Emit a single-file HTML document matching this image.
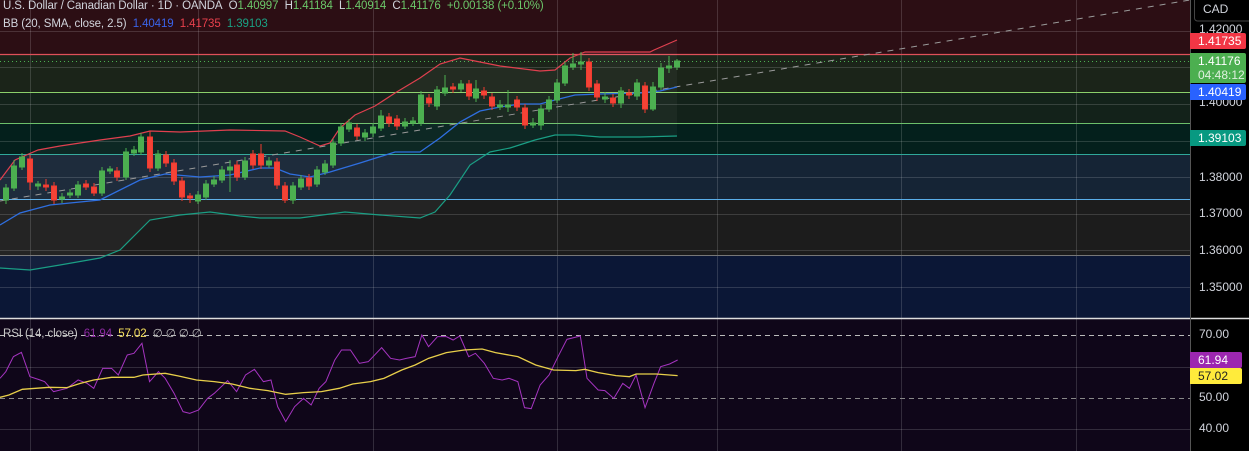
<!DOCTYPE html>
<html><head><meta charset="utf-8"><style>
html,body{margin:0;padding:0;background:#000;}
body{width:1249px;height:451px;overflow:hidden;position:relative;font-family:"Liberation Sans",sans-serif;}
.t{position:absolute;font-size:11.5px;white-space:nowrap;color:#d1d4dc;letter-spacing:-0.1px;}
.ax{position:absolute;left:1199px;font-size:12px;color:#d1d4dc;}
.tag{position:absolute;left:1190px;width:56px;font-size:12px;color:#fff;padding-left:8px;box-sizing:border-box;border-radius:0 2px 2px 0;}
</style></head><body>
<svg width="1249" height="451" style="position:absolute;left:0;top:0">
<rect x="0" y="0" width="1190" height="54" fill="#2c0e14"/>
<rect x="0" y="54" width="1190" height="38" fill="#1b2419"/>
<rect x="0" y="92" width="1190" height="31" fill="#13221a"/>
<rect x="0" y="123" width="1190" height="31" fill="#04201c"/>
<rect x="0" y="154" width="1190" height="46" fill="#152435"/>
<rect x="0" y="200" width="1190" height="55" fill="#1c1c1c"/>
<rect x="0" y="255" width="1190" height="63" fill="#0b1736"/>
<rect x="0" y="319" width="1190" height="132" fill="#0f0619"/>
<g stroke="#ffffff" stroke-opacity="0.15" stroke-width="1">
<line x1="30.5" y1="0" x2="30.5" y2="451"/><line x1="198.5" y1="0" x2="198.5" y2="451"/><line x1="373.5" y1="0" x2="373.5" y2="451"/><line x1="557.5" y1="0" x2="557.5" y2="451"/><line x1="717.5" y1="0" x2="717.5" y2="451"/><line x1="901.5" y1="0" x2="901.5" y2="451"/><line x1="1076.5" y1="0" x2="1076.5" y2="451"/>
<line x1="0" y1="31.5" x2="1190" y2="31.5"/><line x1="0" y1="67.5" x2="1190" y2="67.5"/><line x1="0" y1="104.5" x2="1190" y2="104.5"/><line x1="0" y1="141.5" x2="1190" y2="141.5"/><line x1="0" y1="177.5" x2="1190" y2="177.5"/><line x1="0" y1="214.5" x2="1190" y2="214.5"/><line x1="0" y1="250.5" x2="1190" y2="250.5"/><line x1="0" y1="287.5" x2="1190" y2="287.5"/>
<line x1="0" y1="367.5" x2="1190" y2="367.5"/><line x1="0" y1="429.5" x2="1190" y2="429.5"/>
</g>
<line x1="0" y1="54.5" x2="1190" y2="54.5" stroke="#e0505a" stroke-width="1.2"/>
<line x1="0" y1="61.5" x2="1190" y2="61.5" stroke="#4caf50" stroke-dasharray="1,3"/>
<line x1="0" y1="92.5" x2="1190" y2="92.5" stroke="#8bd06a" stroke-width="1"/>
<line x1="0" y1="123.5" x2="1190" y2="123.5" stroke="#6cc06a" stroke-width="1"/>
<line x1="0" y1="154.5" x2="1190" y2="154.5" stroke="#2fa89a" stroke-width="1"/>
<line x1="0" y1="199.5" x2="1190" y2="199.5" stroke="#5aaee8" stroke-width="1"/>
<line x1="0" y1="255.5" x2="1190" y2="255.5" stroke="#777" stroke-width="1"/>
<line x1="0" y1="318.5" x2="1249" y2="318.5" stroke="#ddd" stroke-width="1.5"/>
<polygon fill="#ffffff" fill-opacity="0.04" points="0,180 15,160 38,150 60,146 100,140 130,136 150,131 180,132 230,130 285,131 300,137 320,146 330,143 340,128 355,115 375,106 395,93 420,78 440,64 460,58 480,62 500,66 540,71 555,70 570,58 585,52 600,52 650,52 677,40 677,136 640,137 600,137 575,135 555,135 535,140 510,148 490,152 470,165 450,195 435,212 420,218 380,215 345,212 300,218 260,218 240,216 210,212 180,215 150,220 138,232 120,250 100,258 60,265 30,270 0,268"/>
<line x1="0" y1="201" x2="1190" y2="0" stroke="#9a9a9a" stroke-width="1" stroke-dasharray="6,6"/>
<polyline fill="none" stroke="#e0404f" stroke-width="1.2" points="0,180 15,160 38,150 60,146 100,140 130,136 150,131 180,132 230,130 285,131 300,137 320,146 330,143 340,128 355,115 375,106 395,93 420,78 440,64 460,58 480,62 500,66 540,71 555,70 570,58 585,52 600,52 650,52 654,50 677,40"/>
<polyline fill="none" stroke="#2f6fe0" stroke-width="1.3" points="0,225 20,213 50,205 100,200 140,180 165,174 200,177 230,175 260,168 275,168 290,174 310,177 330,172 360,163 395,152 420,152 440,138 460,122 480,111 500,107 520,104 540,104 555,100 575,95 600,94 640,93 660,91 677,87"/>
<polyline fill="none" stroke="#1a9e84" stroke-width="1.2" points="0,268 30,270 60,265 100,258 120,250 138,232 150,220 180,215 210,212 240,216 260,218 300,218 345,212 380,215 420,218 435,212 450,195 470,165 490,152 510,148 535,140 555,135 575,135 600,137 640,137 677,136"/>
<g stroke="#4caf50" fill="#4caf50" stroke-width="1">
<line x1="6" y1="184" x2="6" y2="204"/><rect x="3.5" y="188" width="5" height="12"/>
<line x1="14" y1="160" x2="14" y2="191"/><rect x="11.5" y="166" width="5" height="22"/>
<line x1="22" y1="153" x2="22" y2="170"/><rect x="19.5" y="157" width="5" height="10"/>
<line x1="38" y1="181" x2="38" y2="190"/><rect x="35.5" y="184" width="5" height="2"/>
<line x1="62" y1="193" x2="62" y2="203"/><rect x="59.5" y="197" width="5" height="2"/>
<line x1="70" y1="189" x2="70" y2="198"/><rect x="67.5" y="193" width="5" height="2"/>
<line x1="78" y1="181" x2="78" y2="198"/><rect x="75.5" y="185" width="5" height="10"/>
<line x1="102" y1="167" x2="102" y2="196"/><rect x="99.5" y="171" width="5" height="22"/>
<line x1="110" y1="166" x2="110" y2="174"/><rect x="107.5" y="169" width="5" height="2"/>
<line x1="126" y1="148" x2="126" y2="180"/><rect x="123.5" y="152" width="5" height="25"/>
<line x1="134" y1="146" x2="134" y2="156"/><rect x="131.5" y="150" width="5" height="3"/>
<line x1="141" y1="133" x2="141" y2="155"/><rect x="138.5" y="137" width="5" height="15"/>
<line x1="158" y1="150" x2="158" y2="171"/><rect x="155.5" y="154" width="5" height="14"/>
<line x1="198" y1="191" x2="198" y2="204"/><rect x="195.5" y="195" width="5" height="6"/>
<line x1="206" y1="180" x2="206" y2="200"/><rect x="203.5" y="184" width="5" height="13"/>
<line x1="214" y1="176" x2="214" y2="187"/><rect x="211.5" y="180" width="5" height="4"/>
<line x1="222" y1="166" x2="222" y2="183"/><rect x="219.5" y="170" width="5" height="10"/>
<line x1="230" y1="160" x2="230" y2="192"/><rect x="227.5" y="167" width="5" height="3"/>
<line x1="245" y1="157" x2="245" y2="180"/><rect x="242.5" y="161" width="5" height="16"/>
<line x1="269" y1="157" x2="269" y2="168"/><rect x="266.5" y="161" width="5" height="4"/>
<line x1="293" y1="182" x2="293" y2="204"/><rect x="290.5" y="186" width="5" height="14"/>
<line x1="301" y1="175" x2="301" y2="190"/><rect x="298.5" y="179" width="5" height="8"/>
<line x1="317" y1="166" x2="317" y2="187"/><rect x="314.5" y="170" width="5" height="14"/>
<line x1="325" y1="160" x2="325" y2="175"/><rect x="322.5" y="164" width="5" height="8"/>
<line x1="333" y1="139" x2="333" y2="168"/><rect x="330.5" y="143" width="5" height="22"/>
<line x1="341" y1="123" x2="341" y2="146"/><rect x="338.5" y="127" width="5" height="16"/>
<line x1="349" y1="119" x2="349" y2="132"/><rect x="346.5" y="123" width="5" height="6"/>
<line x1="365" y1="129" x2="365" y2="141"/><rect x="362.5" y="133" width="5" height="4"/>
<line x1="373" y1="123" x2="373" y2="137"/><rect x="370.5" y="127" width="5" height="6"/>
<line x1="381" y1="110" x2="381" y2="131"/><rect x="378.5" y="116" width="5" height="12"/>
<line x1="405" y1="118" x2="405" y2="129"/><rect x="402.5" y="122" width="5" height="4"/>
<line x1="413" y1="117" x2="413" y2="126"/><rect x="410.5" y="121" width="5" height="2"/>
<line x1="421" y1="91" x2="421" y2="126"/><rect x="418.5" y="95" width="5" height="28"/>
<line x1="437" y1="86" x2="437" y2="110"/><rect x="434.5" y="90" width="5" height="16"/>
<line x1="445" y1="75" x2="445" y2="96"/><rect x="442.5" y="88" width="5" height="5"/>
<line x1="461" y1="80" x2="461" y2="92"/><rect x="458.5" y="84" width="5" height="5"/>
<line x1="476" y1="80" x2="476" y2="102"/><rect x="473.5" y="89" width="5" height="9"/>
<line x1="500" y1="100" x2="500" y2="110"/><rect x="497.5" y="105" width="5" height="2"/>
<line x1="508" y1="90" x2="508" y2="112"/><rect x="505.5" y="105" width="5" height="2"/>
<line x1="533" y1="118" x2="533" y2="128"/><rect x="530.5" y="123" width="5" height="2"/>
<line x1="541" y1="105" x2="541" y2="130"/><rect x="538.5" y="109" width="5" height="16"/>
<line x1="549" y1="96" x2="549" y2="112"/><rect x="546.5" y="100" width="5" height="9"/>
<line x1="557" y1="79" x2="557" y2="103"/><rect x="554.5" y="83" width="5" height="17"/>
<line x1="565" y1="62" x2="565" y2="86"/><rect x="562.5" y="66" width="5" height="17"/>
<line x1="573" y1="53" x2="573" y2="70"/><rect x="570.5" y="64" width="5" height="3"/>
<line x1="581" y1="52" x2="581" y2="70"/><rect x="578.5" y="62" width="5" height="2"/>
<line x1="605" y1="92" x2="605" y2="103"/><rect x="602.5" y="97" width="5" height="2"/>
<line x1="621" y1="87" x2="621" y2="108"/><rect x="618.5" y="91" width="5" height="12"/>
<line x1="637" y1="79" x2="637" y2="100"/><rect x="634.5" y="83" width="5" height="13"/>
<line x1="653" y1="82" x2="653" y2="111"/><rect x="650.5" y="87" width="5" height="22"/>
<line x1="661" y1="63" x2="661" y2="90"/><rect x="658.5" y="68" width="5" height="19"/>
<line x1="669" y1="56" x2="669" y2="73"/><rect x="666.5" y="66" width="5" height="2"/>
<line x1="677" y1="59" x2="677" y2="70"/><rect x="674.5" y="61" width="5" height="6"/>
</g>
<g stroke="#f23b30" fill="#f44336" stroke-width="1">
<line x1="30" y1="155" x2="30" y2="190"/><rect x="27.5" y="159" width="5" height="23"/>
<line x1="46" y1="179" x2="46" y2="191"/><rect x="43.5" y="185" width="5" height="2"/>
<line x1="54" y1="182" x2="54" y2="204"/><rect x="51.5" y="186" width="5" height="14"/>
<line x1="86" y1="180" x2="86" y2="190"/><rect x="83.5" y="184" width="5" height="3"/>
<line x1="94" y1="183" x2="94" y2="196"/><rect x="91.5" y="187" width="5" height="6"/>
<line x1="117" y1="167" x2="117" y2="181"/><rect x="114.5" y="171" width="5" height="6"/>
<line x1="150" y1="131" x2="150" y2="172"/><rect x="147.5" y="137" width="5" height="31"/>
<line x1="166" y1="151" x2="166" y2="167"/><rect x="163.5" y="155" width="5" height="8"/>
<line x1="174" y1="159" x2="174" y2="185"/><rect x="171.5" y="163" width="5" height="18"/>
<line x1="182" y1="177" x2="182" y2="201"/><rect x="179.5" y="181" width="5" height="16"/>
<line x1="190" y1="193" x2="190" y2="203"/><rect x="187.5" y="196" width="5" height="2"/>
<line x1="237" y1="161" x2="237" y2="181"/><rect x="234.5" y="165" width="5" height="12"/>
<line x1="253" y1="150" x2="253" y2="169"/><rect x="250.5" y="154" width="5" height="11"/>
<line x1="261" y1="144" x2="261" y2="169"/><rect x="258.5" y="154" width="5" height="11"/>
<line x1="277" y1="158" x2="277" y2="189"/><rect x="274.5" y="162" width="5" height="23"/>
<line x1="285" y1="182" x2="285" y2="203"/><rect x="282.5" y="186" width="5" height="14"/>
<line x1="309" y1="174" x2="309" y2="190"/><rect x="306.5" y="178" width="5" height="8"/>
<line x1="357" y1="124" x2="357" y2="140"/><rect x="354.5" y="128" width="5" height="8"/>
<line x1="389" y1="113" x2="389" y2="127"/><rect x="386.5" y="117" width="5" height="6"/>
<line x1="397" y1="115" x2="397" y2="130"/><rect x="394.5" y="119" width="5" height="7"/>
<line x1="429" y1="94" x2="429" y2="107"/><rect x="426.5" y="98" width="5" height="5"/>
<line x1="453" y1="83" x2="453" y2="93"/><rect x="450.5" y="87" width="5" height="2"/>
<line x1="469" y1="80" x2="469" y2="100"/><rect x="466.5" y="84" width="5" height="12"/>
<line x1="484" y1="87" x2="484" y2="99"/><rect x="481.5" y="91" width="5" height="4"/>
<line x1="492" y1="93" x2="492" y2="110"/><rect x="489.5" y="97" width="5" height="9"/>
<line x1="517" y1="96" x2="517" y2="111"/><rect x="514.5" y="100" width="5" height="7"/>
<line x1="525" y1="104" x2="525" y2="129"/><rect x="522.5" y="108" width="5" height="17"/>
<line x1="589" y1="58" x2="589" y2="91"/><rect x="586.5" y="62" width="5" height="25"/>
<line x1="597" y1="80" x2="597" y2="101"/><rect x="594.5" y="84" width="5" height="13"/>
<line x1="613" y1="94" x2="613" y2="107"/><rect x="610.5" y="98" width="5" height="5"/>
<line x1="629" y1="89" x2="629" y2="99"/><rect x="626.5" y="93" width="5" height="2"/>
<line x1="645" y1="82" x2="645" y2="113"/><rect x="642.5" y="86" width="5" height="23"/>
</g>
<line x1="0" y1="335.5" x2="1190" y2="335.5" stroke="#bbb" stroke-dasharray="5,4"/>
<line x1="0" y1="398.5" x2="1190" y2="398.5" stroke="#888" stroke-dasharray="5,4"/>
<g transform="translate(0,310) scale(0.4464,0.3333)">
<polyline fill="none" stroke="#a534c0" stroke-width="1" vector-effect="non-scaling-stroke" points="0,205 13,185 30,140 48,127 67,200 90,210 100,215 120,245 150,235 175,210 195,220 210,235 230,175 250,175 265,195 285,135 300,130 318,100 335,215 355,185 370,205 390,250 410,305 425,310 445,300 465,265 480,250 510,212 530,245 550,195 570,178 590,215 607,210 622,290 640,335 660,290 680,265 697,285 715,235 730,215 750,150 765,120 785,120 805,160 825,155 855,113 875,145 895,150 910,145 930,140 945,75 960,110 980,80 1000,80 1015,90 1030,78 1050,140 1065,130 1085,160 1105,205 1125,210 1140,205 1160,215 1175,293 1190,296 1210,225 1230,195 1250,140 1270,88 1300,78 1315,205 1340,240 1355,242 1375,265 1395,220 1410,235 1425,195 1445,293 1465,220 1480,170 1500,162 1518,150"/>
<polyline fill="none" stroke="#e8cf4a" stroke-width="1.3" vector-effect="non-scaling-stroke" points="0,262 20,255 50,238 80,235 110,232 150,233 180,220 210,210 250,202 300,202 320,195 370,190 400,198 440,210 480,215 520,222 560,235 600,242 640,253 680,248 720,245 760,235 790,222 830,215 860,205 900,180 930,165 960,145 1000,128 1040,120 1080,117 1110,128 1160,140 1200,165 1240,180 1290,182 1310,178 1340,188 1380,197 1410,200 1425,192 1470,192 1518,197"/>
</g>
<line x1="1190.5" y1="0" x2="1190.5" y2="451" stroke="#555"/>
<rect x="1194.5" y="-3" width="58" height="24" rx="3" fill="#000" stroke="#444"/>
</svg>
<div class="t" style="left:3px;top:0px;">U.S. Dollar / Canadian Dollar · 1D · OANDA&nbsp; O<span style="color:#6cc86a">1.40997</span>&nbsp; H<span style="color:#6cc86a">1.41184</span>&nbsp; L<span style="color:#6cc86a">1.40914</span>&nbsp; C<span style="color:#6cc86a">1.41176</span>&nbsp; <span style="color:#6cc86a">+0.00138 (+0.10%)</span></div>
<div class="t" style="left:3px;top:18px;">BB (20, SMA, close, 2.5)&nbsp; <span style="color:#3a63e8">1.40419</span>&nbsp; <span style="color:#e8404c">1.41735</span>&nbsp; <span style="color:#1aa184">1.39103</span></div>
<div class="t" style="left:3px;top:326px;color:#c8c8c8;">RSI (14, close)&nbsp; <span style="color:#8b2aa0">61.94</span>&nbsp; <span style="color:#f5e05a">57.02</span>&nbsp; <span style="color:#bbb">∅ ∅ ∅ ∅</span></div>
<div class="ax" style="left:1203px;top:2px;">CAD</div>
<div class="ax" style="top:22px;">1.42000</div>
<div class="ax" style="top:95px;">1.40000</div>
<div class="ax" style="top:170px;">1.38000</div>
<div class="ax" style="top:206px;">1.37000</div>
<div class="ax" style="top:243px;">1.36000</div>
<div class="ax" style="top:280px;">1.35000</div>
<div class="ax" style="top:327px;">70.00</div>
<div class="ax" style="top:390px;">50.00</div>
<div class="ax" style="top:421px;">40.00</div>
<div class="tag" style="top:33px;height:16px;line-height:16px;background:#f23645;">1.41735</div>
<div class="tag" style="top:53px;height:30px;line-height:14px;background:#4caf50;padding-top:1px;">1.41176<br><span style="color:#dff0df">04:48:12</span></div>
<div class="tag" style="top:84px;height:16px;line-height:16px;background:#2962ff;">1.40419</div>
<div class="tag" style="top:130px;height:16px;line-height:16px;background:#089981;">1.39103</div>
<div class="tag" style="top:352px;height:16px;line-height:16px;background:#9c27b0;left:1190px;width:52px;">61.94</div>
<div class="tag" style="top:368px;height:16px;line-height:16px;background:#ffeb3b;color:#222;left:1190px;width:52px;">57.02</div>
</body></html>
